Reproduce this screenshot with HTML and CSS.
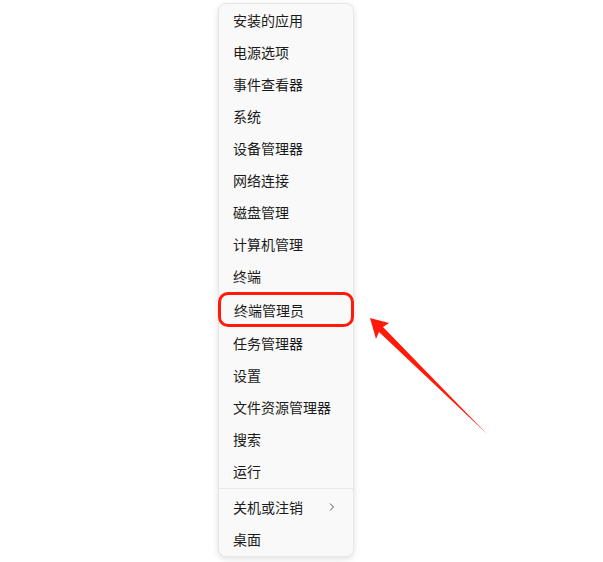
FILE: index.html
```html
<!DOCTYPE html>
<html lang="zh">
<head>
<meta charset="utf-8">
<link rel="stylesheet" href="styles.css">
</head>
<body>
<div class="menu">
  <div class="item">安装的应用</div>
  <div class="item">电源选项</div>
  <div class="item">事件查看器</div>
  <div class="item">系统</div>
  <div class="item">设备管理器</div>
  <div class="item">网络连接</div>
  <div class="item">磁盘管理</div>
  <div class="item">计算机管理</div>
  <div class="item">终端</div>
  <div class="item highlight">终端管理员</div>
  <div class="item">任务管理器</div>
  <div class="item">设置</div>
  <div class="item">文件资源管理器</div>
  <div class="item">搜索</div>
  <div class="item">运行</div>
  <div class="sep"></div>
  <div class="item sub">关机或注销<svg class="chev" width="8" height="10" viewBox="0 0 8 10"><path d="M2 1.5 L5.5 5 L2 8.5" fill="none" stroke="#555" stroke-width="1"/></svg></div>
  <div class="item">桌面</div>
</div>
<svg class="arrow" width="603" height="562" viewBox="0 0 603 562">
  <polygon points="370,318 389,323 383,327 487,434 379,332 376,339" fill="#ff1a0a"/>
</svg>
</body>
</html>
```

FILE: styles.css
```css
html, body {
  margin: 0;
  padding: 0;
  background: #ffffff;
}
body {
  width: 603px;
  height: 562px;
  position: relative;
  overflow: hidden;
  font-family: "Noto Sans CJK SC", "Microsoft YaHei", sans-serif;
}
.menu {
  margin: 3px 0 0 218px;
  width: 136px;
  box-sizing: border-box;
  padding: 0 0 1px;
  background: #f9f9f9;
  border: 1px solid #e6e6e6;
  border-radius: 8px;
  box-shadow: 0 2px 6px rgba(0,0,0,0.12);
  display: flex;
  flex-direction: column;
}
.item {
  height: 32px;
  display: flex;
  align-items: center;
  padding-left: 14px;
  font-size: 14px;
  color: #1b1b1b;
  line-height: 1;
}
.highlight {
  height: 35px;
  margin: 0 -1px;
  padding-left: 13px;
  border: 3px solid #ff1a0a;
  border-radius: 10px;
  box-sizing: border-box;
}
.sep {
  height: 1px;
  background: #e8e8e8;
  margin: 1px 0 2px;
}
.sub {
  justify-content: space-between;
  padding-right: 17px;
}
.chev {
  display: block;
}
.arrow {
  position: absolute;
  left: 0;
  top: 0;
}
```
